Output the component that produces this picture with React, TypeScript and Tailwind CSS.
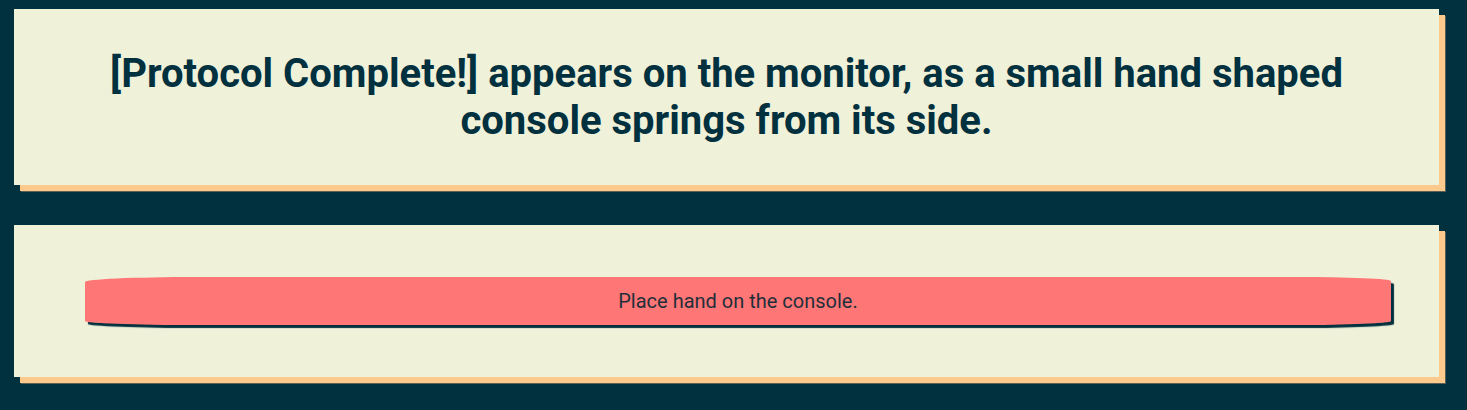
export default function App() {
  return (
    <div className="min-h-[410px] bg-[#01303e] pl-[14px] pr-[28px] pt-[9px] pb-[20px] font-['Roboto',sans-serif]">
      <div className="flex flex-col gap-[40px]">
        <section className="h-[176px] bg-[#f0f1d9] shadow-[6px_6px_0_#fdca8e,7px_7px_0_#5b5f55] flex items-center justify-center">
          <h1 className="text-center text-[40px] leading-[47px] font-bold text-[#01303e] px-8">
            [Protocol Complete!] appears on the monitor, as a small hand shaped
            <br />
            console springs from its side.
          </h1>
        </section>
        <section className="h-[152px] bg-[#f0f1d9] shadow-[6px_6px_0_#fdca8e,7px_7px_0_#5b5f55] flex items-center pl-[71px] pr-[48px]">
          <button className="w-full h-[48px] bg-[#ff7676] text-[20px] text-[#1f2f3a] rounded-[110px_95px_95px_110px/5px_4px_4px_4px] shadow-[3px_3px_1px_#01303e]">
            Place hand on the console.
          </button>
        </section>
      </div>
    </div>
  )
}
